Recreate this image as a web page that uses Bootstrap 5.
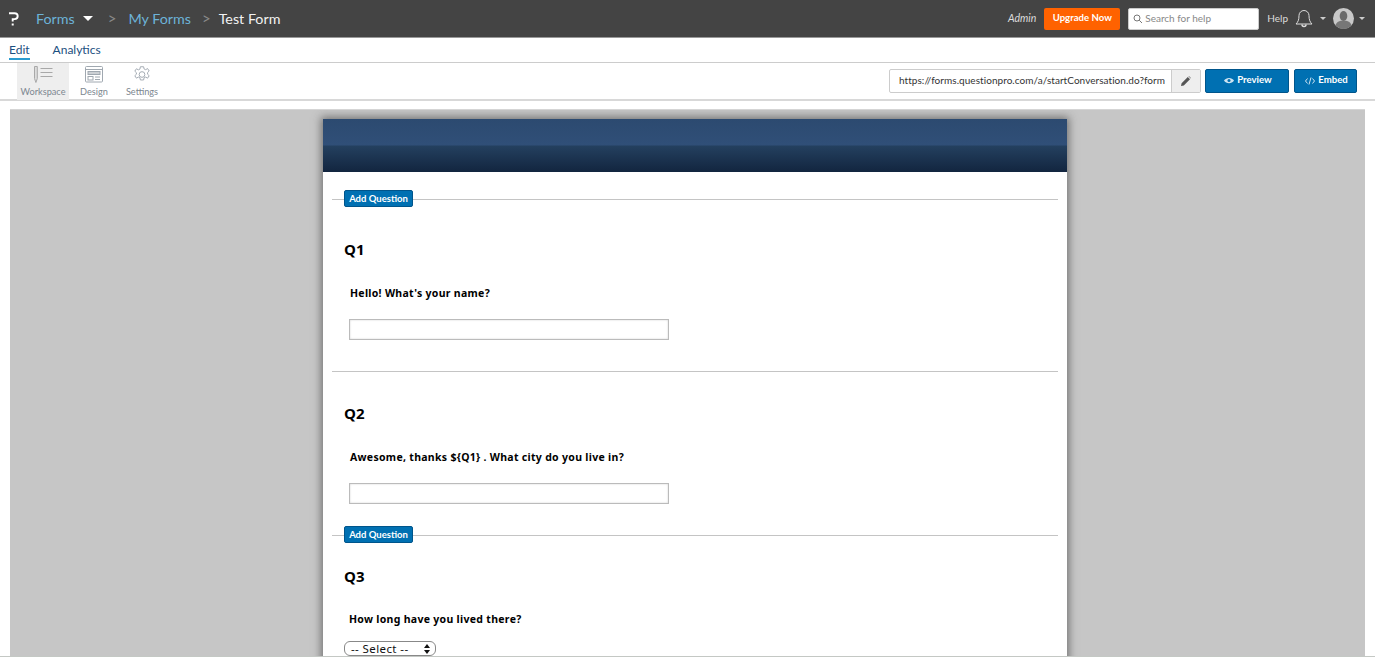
<!DOCTYPE html>
<html lang="en">
<head>
<meta charset="utf-8">
<title>Test Form</title>
<link href="https://cdn.jsdelivr.net/npm/bootstrap@5.3.0/dist/css/bootstrap.min.css" rel="stylesheet">
<style>
html,body{height:657px;overflow:hidden;background:#fff}
body{font-family:"Lato","Open Sans",sans-serif;color:#333;border-bottom:1px solid #c4c8c4}
.topbar{height:38px;background:#444;border-bottom:1px solid #999;padding:0 10px 0 9px;color:#fff}
.crumb{font-size:14.3px;line-height:20px;color:#6db3d8}
.crumb-cur{color:#f2f2f2}
.crumb-sep{color:#8a8a8a;font-size:15px}
.logo-gap{margin-right:17px}
.sep-a{margin:0 12px 0 15px}
.sep-b{margin:0 8px 0 11px}
.caret-down{width:0;height:0;border-left:5px solid transparent;border-right:5px solid transparent;border-top:5px solid #fff}
.caret-sm{width:0;height:0;border-left:3px solid transparent;border-right:3px solid transparent;border-top:3px solid #ccc}
.admin{font-size:10.5px;font-style:italic;color:#ddd}
.btn-upgrade{background:#ff6200;color:#fff;font-size:9.6px;font-weight:700;height:22px;width:76px;padding:0;border:0;border-radius:2px}
.helpbox{width:131px;height:22px;background:#fff;border:1px solid #ccc;border-radius:2px;font-size:10px;color:#888;padding-left:4px}
.search-ico{margin-right:2px}
.help{font-size:10px;color:#ddd}
.bell{margin-left:7px}
.caret-g1{margin-left:7px}
.caret-g2{margin-left:5px}
.avatar{margin-left:7px}
.tabsrow{height:25px;padding-left:9px;border-bottom:1px solid #ccc;gap:23px}
.tabsrow a{font-size:12px;color:#1c4f80;text-decoration:none;line-height:17px;height:19px}
.tabsrow a.on{border-bottom:2px solid #2a9bd0}
.toolrow{height:38px;padding:0 18px 0 17px;border-bottom:2px solid #d8d8d8}
.tool{width:52px;height:37px;font-size:9.2px;color:#7d8790;padding-top:3px;line-height:11px}
.tool span{margin-top:3px}
.tool.on{background:#eeeeee}
.tool.narrow{width:auto;padding-left:7px;padding-right:7px}
.tool-design{margin-left:4px}
.tool-settings{margin-left:4px}
.urlgrp{width:312px;height:24px;border:1px solid #ccc;border-radius:2px;font-size:10px;color:#333}
.urltxt{flex:1;padding:0 0 0 9px;line-height:21px;white-space:nowrap;overflow:hidden;letter-spacing:.05px}
.urlbtn{width:29px;height:22px;background:#eee;border-left:1px solid #ccc}
.btn-blue{background:#0070b2;border:1px solid #00558b;color:#fff;font-size:9.6px;font-weight:700;height:24px;padding:0 0 1px 2px;border-radius:2px}
.btn-preview{width:84px;margin-left:4px}
.btn-embed{width:63px;margin-left:5px}
.ico-eye{margin-right:3px}
.ico-code{margin-right:3px}
.canvasarea{height:547px;margin:8px 10px 0;background:#c6c6c6;padding-top:9px;border-top:1px solid #d5d5d5}
.sheet{width:744px;height:546px;margin-left:313px;background:#fff;box-shadow:0 0 8px 2px rgba(60,60,60,.6)}
.sheethead{height:53px;background:linear-gradient(#2c4a70 0,#304f78 26px,#24405f 27px,#12253f 53px)}
.addrow{margin:0 9px;height:17px}
.add1{margin-top:18px}
.addrow i{display:block;height:1px;background:#c4c4c4;margin-top:2px}
.addline-s{width:12px}
.addline-l{flex:1}
.btn-add{background:#0070b2;border:1px solid #00558b;color:#fff;font-family:"Lato",sans-serif;font-size:9.5px;font-weight:700;line-height:14px;height:17px;width:69px;padding:0;border-radius:2px}
.qnum{font-family:"Open Sans",sans-serif;font-size:15px;font-weight:700;color:#000;line-height:20px;margin:0 0 0 21px}
.qtext{font-family:"Noto Sans",sans-serif;font-size:10.5px;font-weight:700;letter-spacing:.3px;color:#000;line-height:14px;margin:0}
.answer{display:block;width:320px;height:21px;margin-left:26px;border:1px solid #bbb;box-shadow:inset 0 0 2px #ccc;background:#fff}
.divline{height:1px;background:#c4c4c4;margin:0 9px}
.pick{width:92px;height:15px;margin-left:21px;border:1px solid #888;border-radius:6px;font-family:"Noto Sans",sans-serif;font-size:11.5px;color:#111;padding:0 5px 0 6px}
.pick span{line-height:13px;letter-spacing:.4px}
.q1{margin-top:32px}.q1t{margin:27px 0 0 27px}.q1a{margin-top:19px}
.d1{margin-top:31px}.q2{margin-top:31px}.q2t{margin:27px 0 0 27px}.q2a{margin-top:19px}
.add2{margin-top:22px}.q3{margin-top:23px}.q3t{margin:26px 0 0 26px}.q3a{margin-top:15px}
</style>
</head>
<body>
<header class="topbar d-flex align-items-center">
  <svg width="10" height="14" viewBox="0 0 10 14" fill="none" class="logo-gap"><path d="M0 1.200h5.500c2 0 3.200 1.200 3.200 2.900s-1.200 3-3.200 3H3.700v2.300" stroke="#fff" stroke-width="1.900"/><rect x="2.700" y="11.500" width="2" height="2" fill="#fff"/></svg>
  <span class="crumb">Forms</span>
  <span class="caret-down ms-2"></span>
  <span class="crumb-sep sep-a">&gt;</span>
  <span class="crumb">My Forms</span>
  <span class="crumb-sep sep-b">&gt;</span>
  <span class="crumb crumb-cur">Test Form</span>
  <div class="ms-auto d-flex align-items-center">
    <span class="admin me-2">Admin</span>
    <button class="btn-upgrade" type="button">Upgrade Now</button>
    <div class="helpbox d-flex align-items-center ms-2">
      <svg width="10" height="10" viewBox="0 0 10 10" fill="none" stroke="#777" class="search-ico"><circle cx="4" cy="4" r="3"/><path d="M6.200 6.200 9 9"/></svg>
      Search for help
    </div>
    <span class="help ms-2">Help</span>
    <svg class="bell" width="18" height="19" viewBox="0 0 18 19" fill="none" stroke="#ddd"><path d="M1 15c2-2 3-4 3-8.500A5 5 0 0 1 9 1.500a5 5 0 0 1 5 5c0 4.500 1 6.500 3 8.500z"/><path d="M7 15.500a2 2 0 0 0 4 0" stroke-width="1.500"/></svg>
    <span class="caret-sm caret-g1"></span>
    <svg class="avatar" width="21" height="21" viewBox="0 0 21 21"><circle cx="10.500" cy="10.500" r="10.500" fill="#c8c8c8"/><ellipse cx="10.500" cy="8" rx="3.800" ry="5" fill="#6a6a6a"/><path d="M2.500 17.300c1-3.800 5-4.800 8-4.800s7 1 8 4.800a10.500 10.500 0 0 1-16 0z" fill="#777"/></svg>
    <span class="caret-sm caret-g2"></span>
  </div>
</header>
<nav class="tabsrow d-flex align-items-center">
  <a href="#" class="on">Edit</a>
  <a href="#">Analytics</a>
</nav>
<div class="toolrow d-flex align-items-center">
  <div class="tool on d-flex flex-column align-items-center">
    <svg width="20" height="17" viewBox="0 0 20 17" fill="none" stroke="#a8a8a8"><path d="M1.500.5h2.800v12L2.900 16.500 1.500 12.500z" fill="#ddd"/><path d="M7.500 2.500h12M7.500 6.500h12M7.500 10.500h12"/></svg>
    <span>Workspace</span>
  </div>
  <div class="tool narrow tool-design d-flex flex-column align-items-center">
    <svg width="18" height="17" viewBox="0 0 18 17" fill="none" stroke="#a0a8b0"><rect x=".5" y=".5" width="17" height="15.500" rx="1"/><path d="M.5 3.500h17"/><rect x="3" y="5.500" width="12" height="3" fill="#ccd0d4"/><rect x="3" y="10.500" width="5" height="3.500"/><path d="M10 11h5M10 13.500h5"/></svg>
    <span>Design</span>
  </div>
  <div class="tool narrow tool-settings d-flex flex-column align-items-center">
    <svg width="18" height="17" viewBox="0 0 18 18" fill="none" stroke="#a0a8b0"><circle cx="9" cy="9" r="3"/><path d="M7.300.8h3.400l.5 2.300 1.700.8 2-1.200 1.700 2.600-1.700 1.600v1.800l1.700 1.600-1.700 2.600-2-1.200-1.700.8-.5 2.300H7.300l-.5-2.300-1.700-.8-2 1.200-1.700-2.600 1.700-1.600V7.100L1.400 5.500l1.700-2.600 2 1.200 1.700-.8z"/></svg>
    <span>Settings</span>
  </div>
  <div class="ms-auto d-flex align-items-center">
    <div class="urlgrp d-flex">
      <div class="urltxt">https://forms.questionpro.com/a/startConversation.do?form</div>
      <div class="urlbtn d-flex align-items-center justify-content-center">
        <svg width="10" height="10" viewBox="0 0 10 10" fill="#555"><path d="M0 10l.6-2.800L6.800 1l2.200 2.200L2.800 9.400zM7.500.3l.4-.3 2 2-.3.500z"/></svg>
      </div>
    </div>
    <button class="btn-blue btn-preview d-flex align-items-center justify-content-center" type="button">
      <svg class="ico-eye" width="10" height="7" viewBox="0 0 10 7"><path d="M0 3.500C2 0 8 0 10 3.500 8 7 2 7 0 3.500z" fill="#cfe4f2"/><circle cx="5" cy="3.500" r="1.500" fill="#0070b2"/></svg>Preview
    </button>
    <button class="btn-blue btn-embed d-flex align-items-center justify-content-center" type="button">
      <svg class="ico-code" width="10" height="8" viewBox="0 0 10 8" fill="none" stroke="#cfe4f2"><path d="M2.500 1.500 .5 4l2 2.500M7.500 1.500l2 2.500-2 2.500M6 .5 4 7.500"/></svg>Embed
    </button>
  </div>
</div>
<main class="canvasarea overflow-hidden">
  <div class="sheet">
    <div class="sheethead"></div>
    <div class="addrow add1 d-flex align-items-center">
      <i class="addline-s"></i><button class="btn-add" type="button">Add Question</button><i class="addline-l"></i>
    </div>
    <h2 class="qnum q1">Q1</h2>
    <p class="qtext q1t">Hello! What's your name?</p>
    <input class="answer q1a" type="text" aria-label="Your name">
    <div class="divline d1"></div>
    <h2 class="qnum q2">Q2</h2>
    <p class="qtext q2t">Awesome, thanks ${Q1} . What city do you live in?</p>
    <input class="answer q2a" type="text" aria-label="City">
    <div class="addrow add2 d-flex align-items-center">
      <i class="addline-s"></i><button class="btn-add" type="button">Add Question</button><i class="addline-l"></i>
    </div>
    <h2 class="qnum q3">Q3</h2>
    <p class="qtext q3t">How long have you lived there?</p>
    <div class="pick q3a d-flex align-items-center justify-content-between">
      <span>-- Select --</span>
      <svg width="6" height="10" viewBox="0 0 6 10" fill="#111"><path d="M3 0l3 4H0zM3 10 0 6h6z"/></svg>
    </div>
  </div>
</main>
</body>
</html>
